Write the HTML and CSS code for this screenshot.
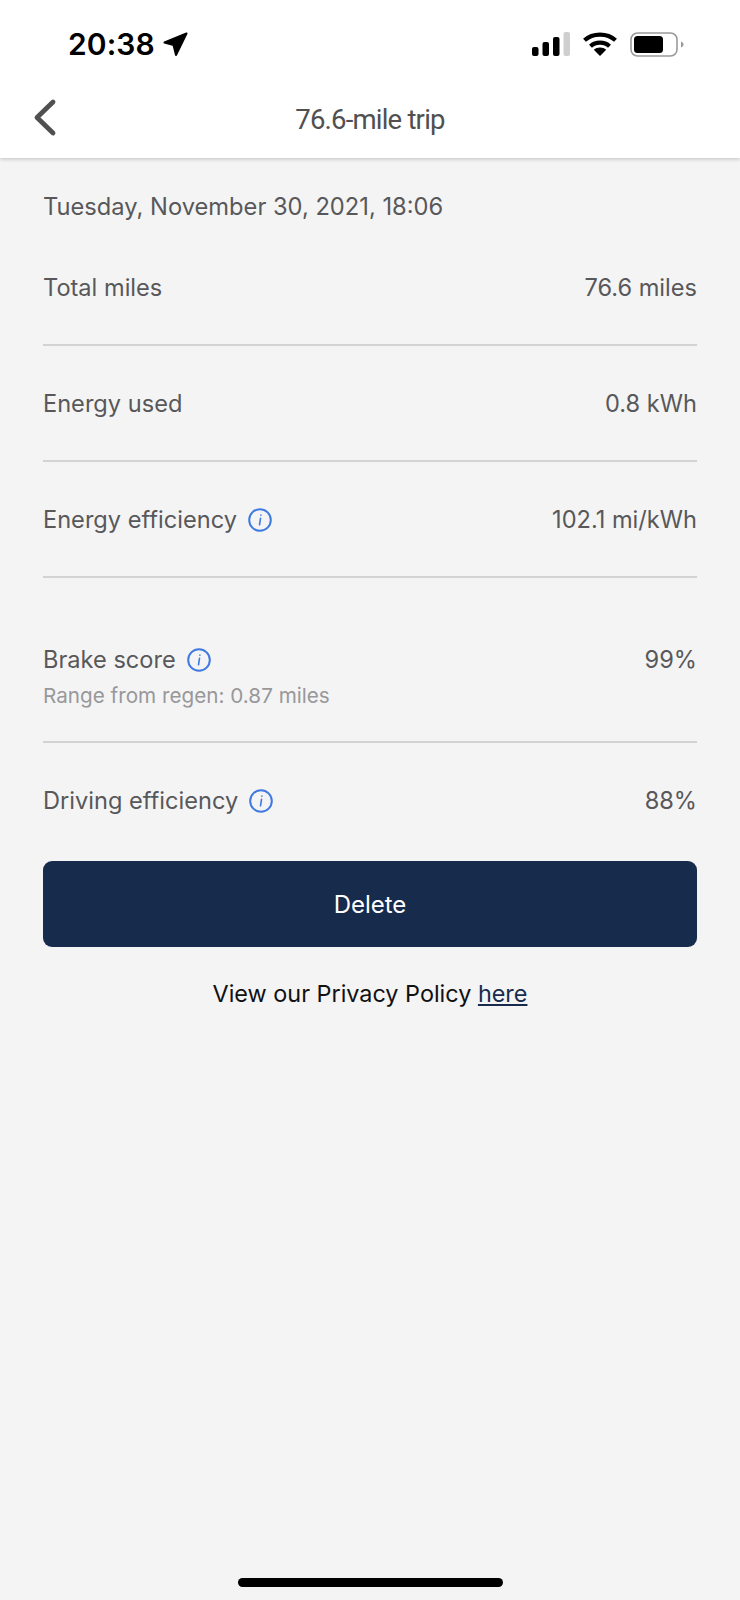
FILE: index.html
```html
<!DOCTYPE html>
<html lang="en">
<head>
<meta charset="utf-8">
<title>76.6-mile trip</title>
<link rel="stylesheet" href="styles.css">
</head>
<body>
<svg class="sprite" width="0" height="0" aria-hidden="true">
  <symbol id="info" viewBox="0 0 24 24">
    <circle cx="12" cy="12" r="10.800" fill="none" stroke="#3f7ae0" stroke-width="2"/>
    <path d="M12.900 7.100v.2M12.500 10.400l-1 6.400" fill="none" stroke="#3f7ae0" stroke-width="1.600" stroke-linecap="round"/>
  </symbol>
</svg>
<div class="phone">
  <header class="topbar">
    <div class="status">
      <div class="clock">
        <span class="time">20:38</span>
        <svg class="arrow" width="25" height="25" viewBox="0 0 25 25"><path d="M23.500 1.500 1.500 10.500l9 2.500 2.500 10z" fill="#000" stroke="#000" stroke-width="2" stroke-linejoin="round"/></svg>
      </div>
      <div class="indicators">
        <svg width="38" height="24" viewBox="0 0 38 24"><rect x="0" y="15" width="6.500" height="9" rx="2" fill="#000"/><rect x="10.500" y="10" width="6.500" height="14" rx="2" fill="#000"/><rect x="21" y="5" width="6.500" height="19" rx="2" fill="#000"/><rect x="31.500" y="0" width="6.500" height="24" rx="2" fill="#cfcfcf"/></svg>
        <svg width="34" height="24" viewBox="0 0 34 24"><path d="M1.500 8.300C9.800.6 24.200.6 32.500 8.300" fill="none" stroke="#000" stroke-width="4.200"/><path d="M7.500 14.200c5-4.700 14-4.700 19 0" fill="none" stroke="#000" stroke-width="4.200"/><path d="M17 24l-6.200-6.200c3.400-3 9-3 12.400 0z" fill="#000"/></svg>
        <svg class="battery" width="54" height="25" viewBox="0 0 54 25"><rect x="1" y="1" width="46" height="23" rx="6.500" fill="none" stroke="#9a9a9a" stroke-width="1.600"/><rect x="4" y="4" width="29" height="17" rx="3.500" fill="#000"/><path d="M51 9.500c1.500.6 2.500 1.700 2.500 3s-1 2.400-2.500 3z" fill="#9a9a9a"/></svg>
      </div>
    </div>
    <nav class="navbar">
      <svg class="back" width="26" height="40" viewBox="0 0 26 40"><path d="M21 5 5 20.500 21 36" fill="none" stroke="#505050" stroke-width="4.800" stroke-linecap="round" stroke-linejoin="round"/></svg>
      <h1 class="title">76.6-mile trip</h1>
    </nav>
  </header>

  <main class="content">
    <p class="date">Tuesday, November 30, 2021, 18:06</p>

    <div class="row row-first">
      <span class="label">Total miles</span>
      <span class="value">76.6 miles</span>
    </div>
    <div class="row">
      <span class="label">Energy used</span>
      <span class="value">0.8 kWh</span>
    </div>
    <div class="row">
      <span class="label">Energy efficiency <svg class="info" width="24" height="24"><use href="#info"/></svg></span>
      <span class="value">102.1 mi/kWh</span>
    </div>
    <div class="row row-brake">
      <div>
        <span class="label">Brake score <svg class="info" width="24" height="24"><use href="#info"/></svg></span>
        <div class="note">Range from regen: 0.87 miles</div>
      </div>
      <span class="value">99%</span>
    </div>
    <div class="row row-plain">
      <span class="label">Driving efficiency <svg class="info" width="24" height="24"><use href="#info"/></svg></span>
      <span class="value">88%</span>
    </div>

    <button class="delete" type="button">Delete</button>
    <p class="privacy">View our Privacy Policy <a href="#">here</a></p>
  </main>

  <div class="home-bar"></div>
</div>
</body>
</html>
```

FILE: styles.css
```css
* {
  box-sizing: border-box;
}

html,
body {
  margin: 0;
  padding: 0;
}

body {
  font-family: Inter, "Liberation Sans", sans-serif;
  background: #f4f4f5;
}

.sprite {
  display: block;
  height: 0;
}

.phone {
  position: relative;
  display: flex;
  flex-direction: column;
  width: 740px;
  height: 1600px;
  background: #f4f4f5;
  overflow: hidden;
}

.topbar {
  background: #fff;
  height: 158px;
  box-shadow: 0 1px 4px rgba(0, 0, 0, 0.22);
  flex: none;
  position: relative;
}

.status {
  display: flex;
  justify-content: space-between;
  align-items: center;
  height: 88px;
  padding: 0 56px 0 68px;
}

.clock {
  display: flex;
  align-items: center;
  gap: 8px;
}

.time {
  font-size: 30px;
  font-weight: 600;
  color: #000;
  letter-spacing: 0.1px;
}

.indicators {
  display: flex;
  align-items: center;
  gap: 13px;
}

.navbar {
  position: relative;
  display: flex;
  align-items: center;
  justify-content: center;
  height: 64px;
  margin-top: -1px;
}

.back {
  position: absolute;
  left: 32px;
  top: 10px;
}

.title {
  margin: 0;
  font-family: Roboto, sans-serif;
  font-size: 27.500px;
  font-weight: 400;
  color: #505050;
  letter-spacing: -0.8px;
}

.content {
  flex: 1;
  padding: 0 43px;
}

.date {
  margin: 32px 0 0;
  font-size: 23.700px;
  line-height: 34px;
  color: #58585a;
}

.row {
  display: flex;
  justify-content: space-between;
  align-items: flex-start;
  padding: 41px 0 40px;
  border-bottom: 2px solid #d2d3d3;
  line-height: 34px;
  height: 116px;
}

.row-first {
  height: 122px;
  padding-top: 47px;
}

.row-brake {
  height: 165px;
  padding-top: 65px;
}

.row-plain {
  border-bottom: 0;
  height: 118px;
  padding-top: 41px;
}

.label,
.value {
  font-size: 23.600px;
  color: #58585a;
}

.label {
  display: inline-flex;
  align-items: center;
  gap: 11px;
}

.info {
  flex: none;
}

.note {
  font-size: 20.700px;
  line-height: 30px;
  color: #98989a;
  margin-top: 2px;
}

.delete {
  display: block;
  width: 100%;
  height: 86px;
  border: 0;
  border-radius: 9px;
  background: #172b4d;
  color: #fff;
  font-family: inherit;
  font-size: 24px;
}

.privacy {
  margin: 30px 0 0;
  text-align: center;
  font-size: 23.400px;
  line-height: 34px;
  color: #111;
}

.privacy a {
  color: #172b4d;
}

.home-bar {
  position: absolute;
  left: 238px;
  bottom: 13px;
  width: 265px;
  height: 9px;
  border-radius: 5px;
  background: #000;
}
```
